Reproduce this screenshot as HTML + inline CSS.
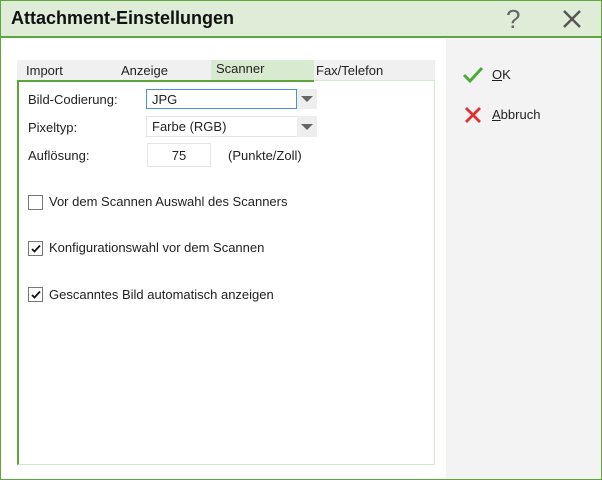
<!DOCTYPE html>
<html><head><style>
*{margin:0;padding:0;box-sizing:border-box}
body{width:602px;height:480px;position:relative;font-family:"Liberation Sans","DejaVu Sans",sans-serif;font-size:13px;color:#222;background:#fff;overflow:hidden}
.a{position:absolute}
</style></head><body>
<div class="a" style="left:0;top:0;width:602px;height:480px;border:1px solid #5ca63c"></div>
<div class="a" style="left:1px;top:1px;width:600px;height:37px;background:#deecd8;border-bottom:2px solid #5ca63c"></div>
<div class="a" style="left:11px;top:8px;font-size:18px;font-weight:bold;color:#111">Attachment-Einstellungen</div>
<div class="a" style="left:506px;top:4px;font-size:26px;color:#666">?</div>
<svg class="a" style="left:562px;top:9px" width="20" height="20"><path d="M2 2L18 18M18 2L2 18" stroke="#555" stroke-width="2.4"/></svg>
<div class="a" style="left:446px;top:39px;width:155px;height:440px;background:#f3f3f3"></div>
<svg class="a" style="left:462px;top:66px" width="22" height="18"><path d="M2 9L8 15L20 2" stroke="#4caa3a" stroke-width="3" fill="none"/></svg>
<div class="a" style="left:492px;top:67px"><u>O</u>K</div>
<svg class="a" style="left:464px;top:106px" width="18" height="18"><path d="M2 2L16 16M16 2L2 16" stroke="#e03030" stroke-width="2.8"/></svg>
<div class="a" style="left:492px;top:107px"><u>A</u>bbruch</div>
<div class="a" style="left:17px;top:60px;width:418px;height:20px;background:#f0f0f0"></div>
<div class="a" style="left:211px;top:60px;width:103px;height:20px;background:#d8ead0"></div>
<div class="a" style="left:26px;top:63px">Import</div>
<div class="a" style="left:121px;top:63px">Anzeige</div>
<div class="a" style="left:216px;top:61px">Scanner</div>
<div class="a" style="left:316px;top:63px">Fax/Telefon</div>
<div class="a" style="left:17px;top:80px;width:418px;height:385px;border:1px solid #d5e8cc;border-left:2px solid #5ca63c"></div>
<div class="a" style="left:17px;top:80px;width:297px;height:2px;background:#5ca63c"></div>
<div class="a" style="left:28px;top:92px">Bild-Codierung:</div>
<div class="a" style="left:146px;top:89px;width:151px;height:20px;border:1px solid #4a90e2;padding:2px 5px">JPG</div>
<div class="a" style="left:297px;top:89px;width:20px;height:20px;background:#eee"></div>
<div class="a" style="left:146px;top:116px;width:171px;height:21px;border:1px solid #e5e5e5;padding:2px 5px">Farbe (RGB)</div>
<div class="a" style="left:297px;top:116px;width:20px;height:21px;background:#eee"></div>
<svg class="a" style="left:301px;top:96px" width="12" height="40"><path d="M0 0H12L6 6Z M0 28H12L6 34Z" fill="#666"/></svg>
<div class="a" style="left:28px;top:120px">Pixeltyp:</div>
<div class="a" style="left:28px;top:148px">Auflösung:</div>
<div class="a" style="left:147px;top:143px;width:64px;height:24px;border:1px solid #e5e5e5;text-align:center;padding-top:4px">75</div>
<div class="a" style="left:228px;top:148px">(Punkte/Zoll)</div>
<div class="a" style="left:28px;top:195px;width:15px;height:15px;border:1px solid #777;background:#fff"></div>
<div class="a" style="left:49px;top:194px">Vor dem Scannen Auswahl des Scanners</div>
<div class="a" style="left:28px;top:241px;width:15px;height:15px;border:1px solid #777;background:#fff"></div>
<svg class="a" style="left:31px;top:244px" width="10" height="10"><path d="M1 5L3.5 7.5L9 1.5" stroke="#111" stroke-width="1.8" fill="none"/></svg>
<div class="a" style="left:49px;top:240px">Konfigurationswahl vor dem Scannen</div>
<div class="a" style="left:28px;top:287px;width:15px;height:15px;border:1px solid #777;background:#fff"></div>
<svg class="a" style="left:31px;top:290px" width="10" height="10"><path d="M1 5L3.5 7.5L9 1.5" stroke="#111" stroke-width="1.8" fill="none"/></svg>
<div class="a" style="left:49px;top:287px">Gescanntes Bild automatisch anzeigen</div>
</body></html>
